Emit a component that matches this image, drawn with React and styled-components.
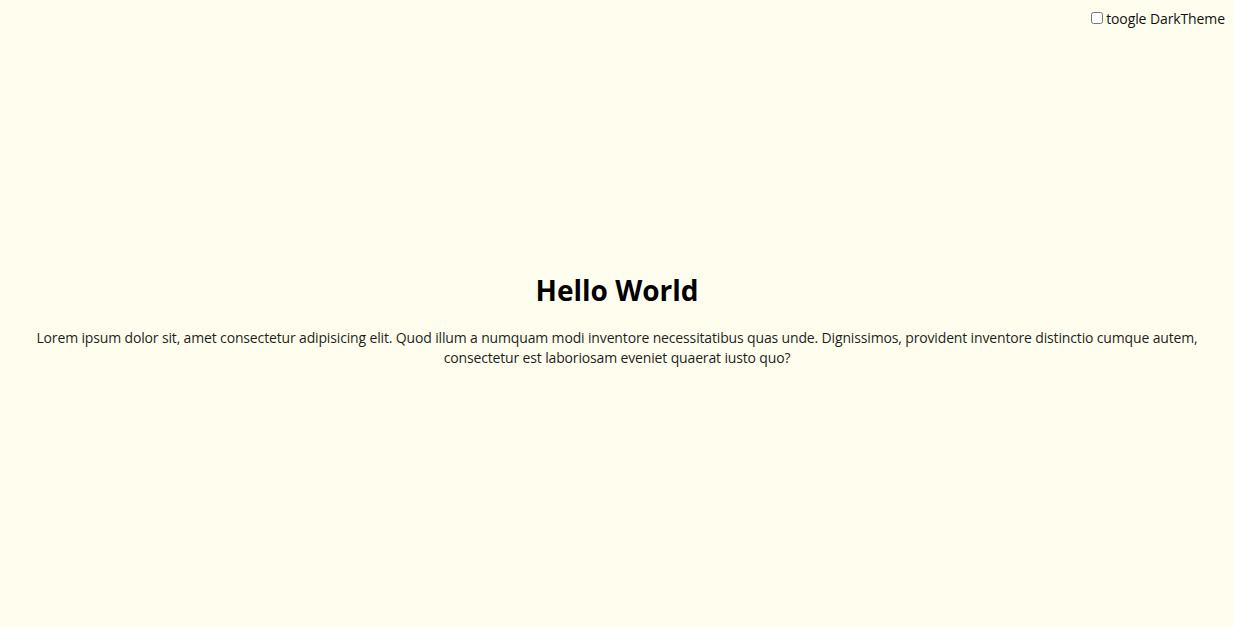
import React, { useState } from "react";
import styled, { createGlobalStyle } from "styled-components";

const Global = createGlobalStyle`
  html, body { margin: 0; padding: 0; }
  body {
    background: #fffeee;
    font-family: "Open Sans", "Noto Sans", sans-serif;
    color: #111;
  }
`;

const Page = styled.div`
  min-height: 100vh;
  display: grid;
  grid-template-rows: auto 1fr;
  background: ${(p) => (p.$dark ? "#1d1d1d" : "#fffeee")};
  color: ${(p) => (p.$dark ? "#eee" : "#111")};
`;

const TopBar = styled.div`
  display: flex;
  justify-content: flex-end;
  padding: 9px 9px 0 0;
`;

const Toggle = styled.label`
  display: flex;
  align-items: center;
  gap: 3px;
  font-size: 14px;
  line-height: 20px;
  letter-spacing: -0.1px;
  cursor: pointer;
`;

const Check = styled.input`
  width: 12px;
  height: 12px;
  margin: 0 0 2px 1px;
`;

const Main = styled.main`
  display: flex;
  flex-direction: column;
  align-items: center;
  justify-content: center;
  text-align: center;
  padding: 0 30px 18px;
`;

const Title = styled.h1`
  margin: 0 0 18px;
  font-size: 28px;
  font-weight: 700;
  line-height: 40px;
  color: #000;
`;

const Text = styled.p`
  margin: 0;
  font-size: 14px;
  line-height: 20px;
  letter-spacing: -0.15px;
  color: #1e1e1e;
`;

export default function App() {
  const [dark, setDark] = useState(false);
  return (
    <>
      <Global />
      <Page $dark={dark}>
        <TopBar>
          <Toggle>
            <Check type="checkbox" checked={dark} onChange={(e) => setDark(e.target.checked)} />
            toogle DarkTheme
          </Toggle>
        </TopBar>
        <Main>
          <Title>Hello World</Title>
          <Text>
            Lorem ipsum dolor sit, amet consectetur adipisicing elit. Quod illum a numquam modi inventore
            necessitatibus quas unde. Dignissimos, provident inventore distinctio cumque autem, consectetur est
            laboriosam eveniet quaerat iusto quo?
          </Text>
        </Main>
      </Page>
    </>
  );
}
